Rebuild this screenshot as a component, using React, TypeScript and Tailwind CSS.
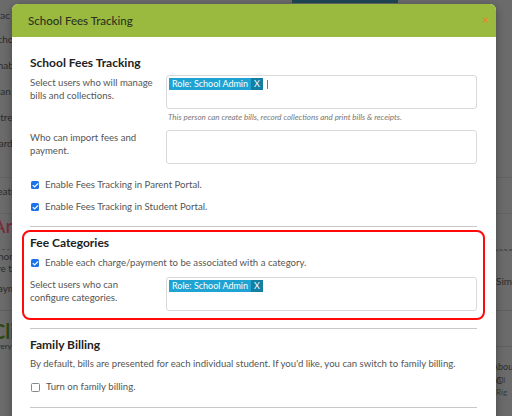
import { Check } from "lucide-react";

const font = { fontFamily: "Lato, 'Open Sans', sans-serif" };

function Tag() {
  return (
    <span className="inline-flex h-[12px] items-stretch text-[9px] leading-[12px] text-white">
      <span className="bg-[#1ea3d2] px-[3px]">Role: School Admin</span>
      <span className="bg-[#147ea3] px-[3px]">X</span>
    </span>
  );
}

function Box({ children, caret }: { children?: React.ReactNode; caret?: boolean }) {
  return (
    <div className="flex h-[34px] w-[311px] items-start gap-[4px] rounded-[3px] border border-[#d9d9d9] bg-white px-[2px] pt-[2px]">
      {children}
      {caret && <span className="mt-[2px] h-[9px] w-px bg-[#777]" />}
    </div>
  );
}

function Field({ label, children }: { label: string[]; children: React.ReactNode }) {
  return (
    <div className="flex items-start">
      <div className="w-[136px] pt-[1px] text-[9.6px] leading-[13px] text-[#555]">
        {label.map((l) => (
          <div key={l}>{l}</div>
        ))}
      </div>
      {children}
    </div>
  );
}

function CheckRow({ label, checked = true }: { label: string; checked?: boolean }) {
  return (
    <div className="flex h-[14px] items-center gap-[6px] pl-[1px]">
      {checked ? (
        <span className="flex h-[8px] w-[8px] items-center justify-center rounded-[1.5px] bg-[#1e73e8]">
          <Check className="h-[7px] w-[7px] text-white" strokeWidth={4} />
        </span>
      ) : (
        <span className="h-[9px] w-[9px] rounded-[1.5px] border border-[#888] bg-white" />
      )}
      <span className="text-[9.6px] text-[#555]">{label}</span>
    </div>
  );
}

function Heading({ children }: { children: string }) {
  return <div className="text-[12px] font-bold leading-[16px] text-[#222]">{children}</div>;
}

export default function App() {
  return (
    <div className="relative h-[416px] w-[512px] overflow-hidden bg-[#6b6b6b]" style={font}>
      {/* page behind the overlay */}
      <div className="ml-[292px] h-[3px] w-[106px] bg-[#1f4753]" />
      <div className="-ml-[8px] flex flex-col text-[10px] leading-[26px] text-[#2b2b2b]">
        <div className="-mt-[1px] h-[24px]">Trac</div>
        <div className="h-[26px]">Schoo</div>
        <div className="h-[26px]">Enabled</div>
        <div className="h-[26px]">Plan</div>
        <div className="h-[26px]">Intres</div>
        <div className="h-[48px] border-b border-[#636363]">Card F</div>
        <div className="h-[36px] border-b border-[#636363]">Featur</div>
        <div className="h-[22px] text-[20px] leading-[22px] text-[#7a2a38]">Are</div>
        <div className="mt-[4px] h-[10px] border-b border-dashed border-[#505050]" />
        <div className="leading-[12px]">Phone</div>
        <div className="leading-[12px]">are th</div>
        <div className="mt-[8px] leading-[12px]">Payment</div>
        <div className="mt-[16px] h-px bg-[#606060]" />
        <div className="mt-[10px] text-[20px] font-bold leading-[20px] text-[#2d4a12]">Click</div>
        <div className="text-[8px] leading-[10px]">Everyt</div>
      </div>

      <div className="absolute right-0 top-[250px] w-[16px] border-t border-dashed border-[#505050]" />
      <div className="absolute right-0 top-[274px] w-[16px] overflow-hidden text-[10px] text-[#2b2b2b]">Simple</div>
      <div className="absolute right-0 top-[346px] h-px w-[16px] bg-[#606060]" />
      <div className="absolute right-0 top-[360px] w-[16px] overflow-hidden text-[9px] text-[#2b2b2b]">
        <span className="-ml-[4px]">About C</span>
      </div>
      <div className="absolute right-0 top-[374px] w-[16px] overflow-hidden text-[8px] text-[#3a3a3a]">All Rig</div>

      {/* modal */}
      <div className="absolute left-[12px] top-[4px] w-[484px] rounded-t-[6px] bg-white shadow-[0_2px_8px_rgba(0,0,0,0.35)]">
        <div className="flex h-[33px] items-center justify-between rounded-t-[6px] bg-[#9aba3f] pl-[16px] pr-[7px]">
          <span className="text-[11.5px] font-medium text-[#2d3320]">School Fees Tracking</span>
          <span className="text-[11px] font-bold text-[#e8832a]">×</span>
        </div>

        <div className="pl-[18px] pr-[19px] pt-[18px] pb-[20px]">
          <Heading>School Fees Tracking</Heading>
          <div className="mt-[4px]">
            <Field label={["Select users who will manage", "bills and collections."]}>
              <div>
                <Box caret>
                  <Tag />
                </Box>
                <div className="mt-[3px] pl-[2px] text-[8px] italic leading-[10px] text-[#777]">
                  This person can create bills, record collections and print bills &amp; receipts.
                </div>
              </div>
            </Field>
          </div>
          <div className="mt-[8px]">
            <Field label={["Who can import fees and", "payment."]}>
              <Box />
            </Field>
          </div>
          <div className="mt-[14px]">
            <CheckRow label="Enable Fees Tracking in Parent Portal." />
          </div>
          <div className="mt-[8px]">
            <CheckRow label="Enable Fees Tracking in Student Portal." />
          </div>
          <div className="mt-[12px] h-px bg-[#c8c8c8]" />

          <div className="-mx-[8px] mt-[3px] rounded-[8px] border-2 border-[#ff0a0a] px-[6px] pb-[7px] pt-[3px]">
            <Heading>Fee Categories</Heading>
            <div className="mt-[5px]">
              <CheckRow label="Enable each charge/payment to be associated with a category." />
            </div>
            <div className="mt-[7px]">
              <Field label={["Select users who can", "configure categories."]}>
                <Box>
                  <Tag />
                </Box>
              </Field>
            </div>
          </div>

          <div className="mt-[8px] h-px bg-[#c8c8c8]" />
          <div className="mt-[8px]">
            <Heading>Family Billing</Heading>
          </div>
          <div className="mt-[4px] text-[9.6px] leading-[13px] text-[#555]">
            By default, bills are presented for each individual student. If you'd like, you can switch to family billing.
          </div>
          <div className="mt-[10px]">
            <CheckRow label="Turn on family billing." checked={false} />
          </div>
          <div className="mt-[13px] h-px bg-[#c8c8c8]" />
        </div>
      </div>
    </div>
  );
}
